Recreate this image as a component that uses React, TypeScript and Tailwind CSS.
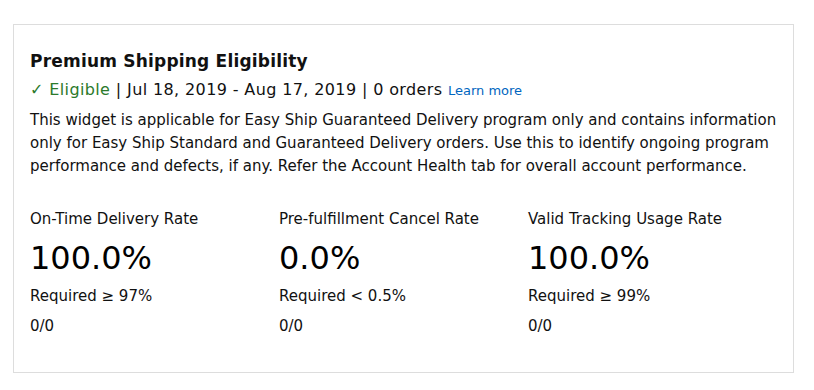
const metrics = [
  { label: "On-Time Delivery Rate", value: "100.0%", req: "Required ≥ 97%", count: "0/0" },
  { label: "Pre-fulfillment Cancel Rate", value: "0.0%", req: "Required < 0.5%", count: "0/0" },
  { label: "Valid Tracking Usage Rate", value: "100.0%", req: "Required ≥ 99%", count: "0/0" },
]

const intro = [
  "This widget is applicable for Easy Ship Guaranteed Delivery program only and contains information",
  "only for Easy Ship Standard and Guaranteed Delivery orders. Use this to identify ongoing program",
  "performance and defects, if any. Refer the Account Health tab for overall account performance.",
]

export default function App() {
  return (
    <div className="min-h-screen bg-white pt-[24px] pl-[13px] font-['DejaVu_Sans',Verdana,sans-serif] text-[#111]">
      <div className="w-[781px] h-[349px] border border-[#dddddd] pl-[16px] pr-4 pt-[25px]">
        <h2 className="text-[17px] font-bold leading-[22px] tracking-[0.2px]">Premium Shipping Eligibility</h2>
        <div className="text-[16px] leading-[24px] mt-[6px] tracking-[0.38px]">
          <span className="text-[#2b7a2b]">✓ Eligible</span> | Jul 18, 2019 - Aug 17, 2019 | 0 orders{" "}
          <a href="#" className="text-[13px] tracking-normal text-[#0066c0]">Learn more</a>
        </div>
        <p className="text-[15px] leading-[23px] mt-[6px] whitespace-nowrap">
          {intro.map((line) => (
            <span key={line} className="block">{line}</span>
          ))}
        </p>
        <div className="grid grid-cols-[249px_249px_249px] mt-[31px]">
          {metrics.map((m) => (
            <div key={m.label}>
              <div className="text-[15px] leading-[20px]">{m.label}</div>
              <div className="text-[32px] leading-[38px] mt-[10px] text-black">{m.value}</div>
              <div className="text-[15px] leading-[20px] mt-[9px]">{m.req}</div>
              <div className="text-[15px] leading-[20px] mt-[10px]">{m.count}</div>
            </div>
          ))}
        </div>
      </div>
    </div>
  )
}
